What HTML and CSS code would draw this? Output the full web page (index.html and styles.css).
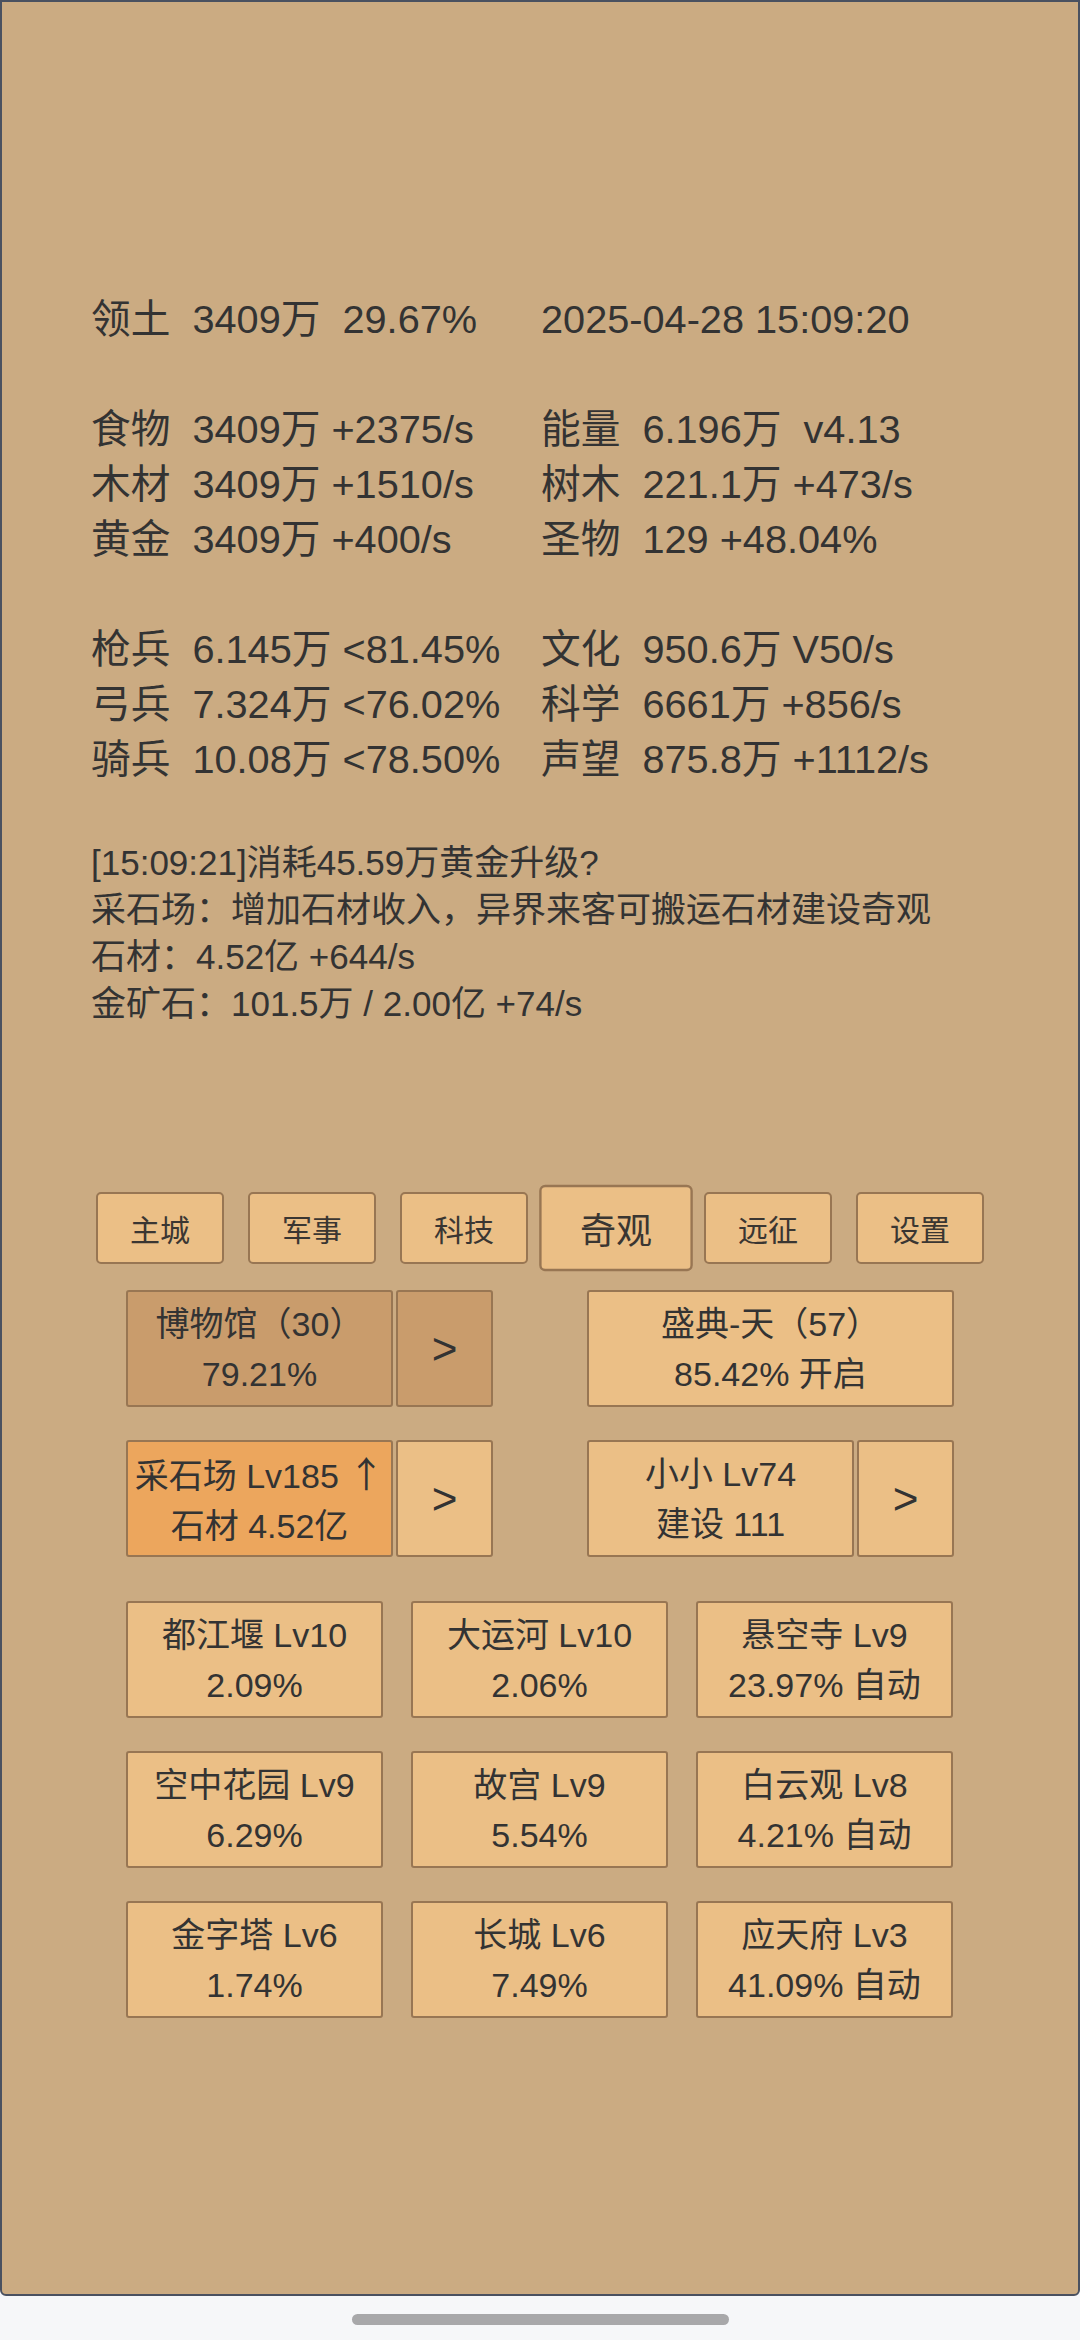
FILE: index.html
```html
<!DOCTYPE html>
<html lang="zh-CN">
<head>
<meta charset="utf-8">
<title>奇观</title>
<link rel="stylesheet" href="styles.css">
</head>
<body>
<div class="screen">
  <div class="stats">
    <div class="cell">领土  3409万  29.67%</div>
    <div class="cell">2025-04-28 15:09:20</div>
    <div class="cell blank"> </div>
    <div class="cell blank"> </div>
    <div class="cell">食物  3409万 +2375/s</div>
    <div class="cell">能量  6.196万  v4.13</div>
    <div class="cell">木材  3409万 +1510/s</div>
    <div class="cell">树木  221.1万 +473/s</div>
    <div class="cell">黄金  3409万 +400/s</div>
    <div class="cell">圣物  129 +48.04%</div>
    <div class="cell blank"> </div>
    <div class="cell blank"> </div>
    <div class="cell">枪兵  6.145万 &lt;81.45%</div>
    <div class="cell">文化  950.6万 V50/s</div>
    <div class="cell">弓兵  7.324万 &lt;76.02%</div>
    <div class="cell">科学  6661万 +856/s</div>
    <div class="cell">骑兵  10.08万 &lt;78.50%</div>
    <div class="cell">声望  875.8万 +1112/s</div>
  </div>

  <div class="log">
    <div class="log-line">[15:09:21]消耗45.59万黄金升级?</div>
    <div class="log-line">采石场：增加石材收入，异界来客可搬运石材建设奇观</div>
    <div class="log-line">石材：4.52亿 +644/s</div>
    <div class="log-line">金矿石：101.5万 / 2.00亿 +74/s</div>
  </div>

  <div class="tabs">
    <div class="tab">主城</div>
    <div class="tab">军事</div>
    <div class="tab">科技</div>
    <div class="tab active">奇观</div>
    <div class="tab">远征</div>
    <div class="tab">设置</div>
  </div>

  <div class="panel">
    <div class="pair-row">
      <div class="group">
        <div class="box main dark"><span>博物馆（30）</span><span>79.21%</span></div>
        <div class="box arrow dark">&gt;</div>
      </div>
      <div class="group">
        <div class="box wide"><span>盛典-天（57）</span><span>85.42% 开启</span></div>
      </div>
    </div>
    <div class="pair-row">
      <div class="group">
        <div class="box main orange"><span>采石场 Lv185 <span class="up">↑</span></span><span>石材 4.52亿</span></div>
        <div class="box arrow">&gt;</div>
      </div>
      <div class="group">
        <div class="box main"><span>小小 Lv74</span><span>建设 111</span></div>
        <div class="box arrow">&gt;</div>
      </div>
    </div>

    <div class="grid">
      <div class="box"><span>都江堰 Lv10</span><span>2.09%</span></div>
      <div class="box"><span>大运河 Lv10</span><span>2.06%</span></div>
      <div class="box"><span>悬空寺 Lv9</span><span>23.97% 自动</span></div>
      <div class="box"><span>空中花园 Lv9</span><span>6.29%</span></div>
      <div class="box"><span>故宫 Lv9</span><span>5.54%</span></div>
      <div class="box"><span>白云观 Lv8</span><span>4.21% 自动</span></div>
      <div class="box"><span>金字塔 Lv6</span><span>1.74%</span></div>
      <div class="box"><span>长城 Lv6</span><span>7.49%</span></div>
      <div class="box"><span>应天府 Lv3</span><span>41.09% 自动</span></div>
    </div>
  </div>
</div>
<div class="home-bar"><div class="pill"></div></div>
</body>
</html>
```

FILE: styles.css
```css
html, body {
  margin: 0;
  padding: 0;
}

body {
  width: 1080px;
  height: 2340px;
  background: #f6f7f9;
  font-family: "Liberation Sans", Arial, "Noto Sans CJK SC", sans-serif;
  color: #333333;
  overflow: hidden;
}

.screen {
  box-sizing: border-box;
  width: 1080px;
  height: 2296px;
  background: #cbab82;
  border: 2px solid #4a5160;
  border-radius: 0 0 6px 6px;
  padding-top: 290px;
}

.stats {
  display: grid;
  grid-template-columns: 450px 1fr;
  padding-left: 89px;
  font-size: 39.7px;
  line-height: 55px;
}

.cell {
  white-space: pre;
  height: 55px;
}

.log {
  margin-top: 52px;
  padding-left: 89px;
  font-size: 35px;
  line-height: 47px;
}

.log-line {
  height: 47px;
  white-space: nowrap;
}

.tabs {
  margin-top: 165px;
  display: flex;
  justify-content: center;
  gap: 24px;
}

.tab {
  box-sizing: border-box;
  width: 128px;
  height: 72px;
  background: #ebbf86;
  border: 2px solid #987653;
  border-radius: 5px;
  display: flex;
  align-items: center;
  justify-content: center;
  font-size: 30px;
  color: #3a3632;
}

.tab.active {
  transform: scale(1.2);
}

.panel {
  width: 828px;
  margin: 26px auto 0;
}

.pair-row {
  display: flex;
  justify-content: space-between;
  margin-bottom: 33px;
}

.pair-row:last-of-type {
  margin-bottom: 0;
}

.group {
  display: flex;
  gap: 3px;
  width: 367px;
}

.box {
  box-sizing: border-box;
  height: 117px;
  background: #ebbf86;
  border: 2px solid #987653;
  border-radius: 3px;
  display: flex;
  flex-direction: column;
  align-items: center;
  justify-content: center;
  font-size: 34px;
  line-height: 50px;
  color: #333333;
  white-space: nowrap;
}

.up {
  font-family: "Noto Sans CJK SC", sans-serif;
  font-size: 36px;
}

.box.main {
  width: 267px;
}

.box.wide {
  width: 367px;
}

.box.arrow {
  width: 97px;
  font-size: 44px;
}

.box.dark {
  background: #c99c6c;
}

.box.orange {
  background: #eca65d;
}

.grid {
  margin-top: 44px;
  display: grid;
  grid-template-columns: repeat(3, 257px);
  column-gap: 28px;
  row-gap: 33px;
}

.home-bar {
  height: 44px;
  display: flex;
  justify-content: center;
}

.pill {
  margin-top: 18px;
  width: 377px;
  height: 11px;
  border-radius: 6px;
  background: #a8a8aa;
}
```
